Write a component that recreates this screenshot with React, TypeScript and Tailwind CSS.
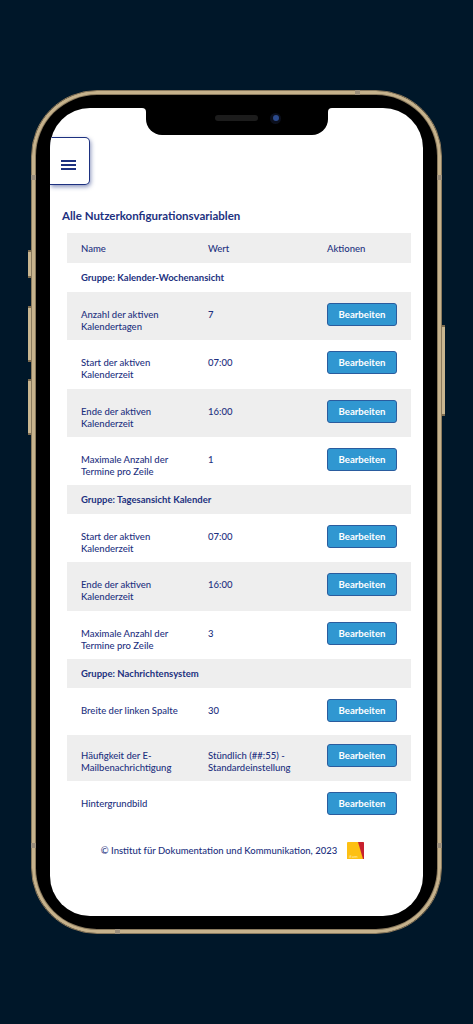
import React from 'react';

type Row =
  | { group: string; gray?: boolean }
  | { name: string; value: string; h: string; gray?: boolean; compact?: boolean };

const rows: Row[] = [
  { group: 'Gruppe: Kalender-Wochenansicht' },
  { name: 'Anzahl der aktiven Kalendertagen', value: '7', h: 'h-[48px]', gray: true },
  { name: 'Start der aktiven Kalenderzeit', value: '07:00', h: 'h-[49px]' },
  { name: 'Ende der aktiven Kalenderzeit', value: '16:00', h: 'h-[48px]', gray: true },
  { name: 'Maximale Anzahl der Termine pro Zeile', value: '1', h: 'h-[48px]' },
  { group: 'Gruppe: Tagesansicht Kalender', gray: true },
  { name: 'Start der aktiven Kalenderzeit', value: '07:00', h: 'h-[48px]' },
  { name: 'Ende der aktiven Kalenderzeit', value: '16:00', h: 'h-[49px]', gray: true },
  { name: 'Maximale Anzahl der Termine pro Zeile', value: '3', h: 'h-[48px]' },
  { group: 'Gruppe: Nachrichtensystem', gray: true },
  { name: 'Breite der linken Spalte', value: '30', h: 'h-[47px]' },
  { name: 'Häufigkeit der E-Mailbenachrichtigung', value: 'Stündlich (##:55) - Standardeinstellung', h: 'h-[46px]', gray: true, compact: true },
  { name: 'Hintergrundbild', value: '', h: 'h-[45px]' },
];

function SideButton({ className }: { className: string }) {
  return <div className={`absolute w-[3px] bg-[#c9b690] border-y-2 border-[#7d6c50] ${className}`} />;
}

function Band({ className }: { className: string }) {
  return <div className={`absolute bg-[#9c8f7c] ${className}`} />;
}

function Logo() {
  return (
    <svg width="17" height="17" viewBox="0 0 17 17" className="ml-[10px] shrink-0">
      <path d="M0 1 Q0 0 1 0 H16 Q17 0 17 1 V17 H0 Z" fill="#fdc013" />
      <path d="M11 0 H16 Q17 0 17 1 V17 H16 Z" fill="#c8202f" />
      <text x="2" y="16" fontSize="4.5" fill="#ffe9a8" fontFamily="Lato, sans-serif">ifam</text>
    </svg>
  );
}

export default function App() {
  return (
    <div className="min-h-[1024px] bg-[#001729] pt-[90px] font-['Lato',sans-serif] text-[#1d3180] overflow-hidden">
      <div className="relative mx-auto w-[411px] h-[844px] rounded-[66px] border border-[#8a7a5e] bg-black px-[18px] py-[17px] shadow-[inset_0_0_0_3px_#c6b28c,inset_0_0_0_4px_#8a7a5e]">
        <SideButton className="-left-[4px] top-[159px] h-[28px]" />
        <SideButton className="-left-[4px] top-[215px] h-[56px]" />
        <SideButton className="-left-[4px] top-[288px] h-[56px]" />
        <SideButton className="-right-[4px] top-[234px] h-[91px]" />
        <Band className="top-[84px] -left-[1px] w-[5px] h-[5px]" />
        <Band className="top-[84px] -right-[1px] w-[5px] h-[5px]" />
        <Band className="top-[752px] -left-[1px] w-[5px] h-[5px]" />
        <Band className="top-[752px] -right-[1px] w-[5px] h-[5px]" />
        <Band className="-top-[1px] left-[323px] w-[5px] h-[5px]" />
        <Band className="-bottom-[1px] left-[83px] w-[5px] h-[5px]" />

        <div className="relative h-[808px] rounded-[40px] bg-white overflow-hidden">
          {/* Notch */}
          <div className="absolute top-0 left-[92px] w-[4px] h-[4px] bg-black">
            <div className="w-full h-full bg-white rounded-tr-[4px]" />
          </div>
          <div className="absolute top-0 left-[278px] w-[4px] h-[4px] bg-black">
            <div className="w-full h-full bg-white rounded-tl-[4px]" />
          </div>
          <div className="absolute top-0 left-[96px] w-[182px] h-[27px] bg-black rounded-b-[16px]">
            <div className="flex items-center h-[20px] pl-[69px]">
              <div className="w-[43px] h-[6px] rounded-full bg-[#1c1c1c]" />
              <div className="ml-[12px] w-[11px] h-[11px] rounded-full bg-[#0b0f1c] flex items-center justify-center">
                <div className="w-[6px] h-[6px] rounded-full bg-[#2b4a8c]" />
              </div>
            </div>
          </div>

          <div className="pt-[29px]">
            <button className="flex items-center justify-center pt-[8px] pr-[1px] w-[39.5px] h-[48px] bg-white border border-l-0 border-[#1d3180] rounded-r-[5px] shadow-[1px_2px_4px_rgba(29,49,128,0.5)]">
              <span className="flex flex-col gap-[2px]">
                <span className="block w-[15px] h-[2px] bg-[#1d3180]" />
                <span className="block w-[15px] h-[2px] bg-[#1d3180]" />
                <span className="block w-[15px] h-[2px] bg-[#1d3180]" />
              </span>
            </button>

            <h1 className="mt-[23px] ml-[12px] text-[11.5px] leading-[16px] font-bold">Alle Nutzerkonfigurationsvariablen</h1>

            <div className="mt-[9px] ml-[17px] w-[344px] text-[9.5px] leading-[11.5px] font-medium">
              <div className="grid grid-cols-[127px_119px_1fr] items-center h-[30px] pl-[14px] pt-[1px] bg-[#eeeeee]">
                <div>Name</div>
                <div>Wert</div>
                <div>Aktionen</div>
              </div>
              {rows.map((row, i) => {
                if ('group' in row) {
                  return (
                    <div key={i} className={`flex items-center h-[29px] pl-[14px] pt-[1px] font-bold ${row.gray ? 'bg-[#eeeeee]' : ''}`}>
                      {row.group}
                    </div>
                  );
                }
                return (
                  <div key={i} className={`grid grid-cols-[127px_119px_1fr] pl-[14px] ${row.h} ${row.gray ? 'bg-[#eeeeee]' : ''}`}>
                    <div className={`pr-[27px] ${row.compact ? 'pt-[15px]' : 'pt-[17px]'}`}>{row.name}</div>
                    <div className={`pr-[10px] ${row.compact ? 'pt-[15px]' : 'pt-[17px]'}`}>{row.value}</div>
                    <div className={row.compact ? 'pt-[9px]' : 'pt-[11px]'}>
                      <button className="w-[70px] h-[23px] rounded-[3px] bg-[#3097d1] border border-[#2a5c9e] text-white font-bold text-[9.6px] leading-none">
                        Bearbeiten
                      </button>
                    </div>
                  </div>
                );
              })}
            </div>

            <div className="mt-[16px] flex items-center justify-center pr-[8px] text-[9.5px] leading-[12px] font-medium">
              <span>© Institut für Dokumentation und Kommunikation, 2023</span>
              <Logo />
            </div>
          </div>
        </div>
      </div>
    </div>
  );
}
